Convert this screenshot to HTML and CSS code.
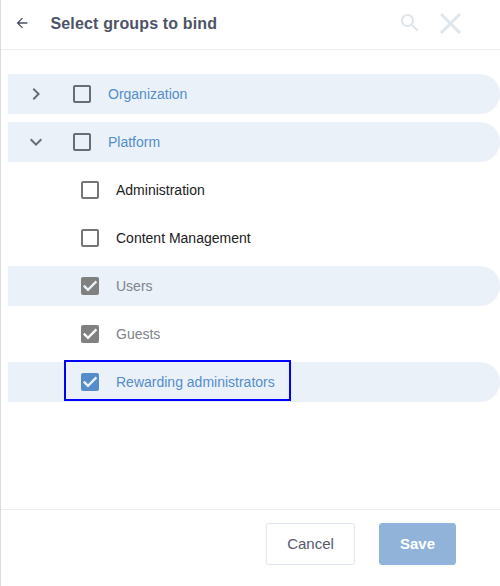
FILE: index.html
```html
<!DOCTYPE html>
<html lang="en">
<head>
<meta charset="utf-8">
<title>Select groups to bind</title>
<link rel="stylesheet" href="styles.css">
</head>
<body>
<section class="panel">
  <header class="header">
    <svg class="back" viewBox="0 0 24 24"><path d="M20 11H7.83l5.59-5.59L12 4l-8 8 8 8 1.41-1.41L7.83 13H20v-2z"/></svg>
    <h1 class="title">Select groups to bind</h1>
    <svg class="search" viewBox="0 0 24 24"><path d="M15.5 14h-.79l-.28-.27C15.41 12.59 16 11.11 16 9.5 16 5.91 13.09 3 9.5 3S3 5.91 3 9.5 5.91 16 9.5 16c1.61 0 3.09-.59 4.23-1.57l.27.28v.79l5 4.99L20.49 19l-4.99-5zm-6 0C7.01 14 5 11.99 5 9.5S7.01 5 9.5 5 14 7.01 14 9.5 11.99 14 9.5 14z"/></svg>
    <svg class="close" viewBox="0 0 21 21"><path d="M1 1l19 19M20 1L1 20"/></svg>
  </header>
  <main class="tree">
    <div class="row shaded">
      <svg class="arrow" viewBox="0 0 24 24"><path d="M10 6L8.59 7.41 13.17 12l-4.58 4.59L10 18l6-6z"/></svg>
      <svg class="box" viewBox="0 0 24 24"><path d="M19 5v14H5V5h14m0-2H5c-1.1 0-2 .9-2 2v14c0 1.1.9 2 2 2h14c1.1 0 2-.9 2-2V5c0-1.1-.9-2-2-2z"/></svg>
      <span class="label accent">Organization</span>
    </div>
    <div class="row shaded">
      <svg class="arrow" viewBox="0 0 24 24"><path d="M16.59 8.59L12 13.17 7.41 8.59 6 10l6 6 6-6z"/></svg>
      <svg class="box" viewBox="0 0 24 24"><path d="M19 5v14H5V5h14m0-2H5c-1.1 0-2 .9-2 2v14c0 1.1.9 2 2 2h14c1.1 0 2-.9 2-2V5c0-1.1-.9-2-2-2z"/></svg>
      <span class="label accent">Platform</span>
    </div>
    <div class="row child">
      <span class="check"></span>
      <span class="label">Administration</span>
    </div>
    <div class="row child">
      <span class="check"></span>
      <span class="label">Content Management</span>
    </div>
    <div class="row child shaded disabled">
      <span class="check checked"><svg viewBox="0 0 18 18"><path d="M2.8 8.6l4.2 4.2 8.4-8.4"/></svg></span>
      <span class="label">Users</span>
    </div>
    <div class="row child disabled">
      <span class="check checked"><svg viewBox="0 0 18 18"><path d="M2.8 8.6l4.2 4.2 8.4-8.4"/></svg></span>
      <span class="label">Guests</span>
    </div>
    <div class="row child shaded selected">
      <span class="check checked"><svg viewBox="0 0 18 18"><path d="M2.8 8.6l4.2 4.2 8.4-8.4"/></svg></span>
      <span class="label accent">Rewarding administrators</span>
      <span class="marker"></span>
    </div>
  </main>
  <footer class="footer">
    <button class="button cancel">Cancel</button>
    <button class="button save">Save</button>
  </footer>
</section>
</body>
</html>
```
FILE: styles.css
```css
* { box-sizing: border-box; }
body {
  margin: 0;
  font-family: "Liberation Sans", Arial, sans-serif;
  background: #fff;
}
.panel {
  display: flex;
  flex-direction: column;
  height: 586px;
  border-left: 1px solid #dcdcde;
  overflow: hidden;
}
.header {
  display: flex;
  align-items: center;
  height: 50px;
  padding: 0 39px 3px 13px;
  border-bottom: 1px solid #eeeeee;
}
.back { width: 16px; height: 16px; fill: #4a5064; }
.title {
  flex: 1;
  margin: 1px 0 0 20.5px;
  font-size: 16px;
  line-height: 20px;
  font-weight: 700;
  letter-spacing: 0.15px;
  color: #4d5468;
}
.search { width: 24px; height: 24px; fill: #dfe6ec; }
.close {
  width: 21px;
  height: 21px;
  margin-left: 18px;
  fill: none;
  stroke: #dfe6ec;
  stroke-width: 3;
}
.tree {
  flex: 1;
  display: flex;
  flex-direction: column;
  gap: 8px;
  padding: 24px 0 0 7px;
}
.row {
  position: relative;
  display: flex;
  align-items: center;
  height: 40px;
  padding-left: 16px;
  border-radius: 0 20px 20px 0;
}
.shaded { background: #eaf1f9; }
.arrow { width: 24px; height: 24px; fill: #696c70; }
.box { width: 24px; height: 24px; margin: 0 14px 0 22px; fill: #696c70; }
.child { padding-left: 73px; }
.check {
  width: 18px;
  height: 18px;
  margin-right: 17px;
  border: 2px solid #757575;
  border-radius: 2px;
}
.checked { border: 0; background: #808080; }
.checked svg {
  display: block;
  fill: none;
  stroke: #fff;
  stroke-width: 2.3;
}
.shaded .checked svg { stroke: #eaf1f9; }
.selected .checked { background: #558dcb; }
.label { font-size: 14px; line-height: 20px; color: #212121; }
.disabled .label { color: #808488; }
.row .accent { color: #558dcb; }
.marker {
  position: absolute;
  left: 56px;
  top: -2px;
  width: 227px;
  height: 41px;
  border: 2px solid #00f;
}
.footer {
  display: flex;
  justify-content: flex-end;
  gap: 24px;
  height: 77px;
  padding: 13px 44px 0 0;
  border-top: 1px solid #eeeeee;
}
.button {
  height: 42px;
  padding: 0 0 2px;
  border: 1px solid #dfe6ee;
  border-radius: 3px;
  font: 15px "Liberation Sans", Arial, sans-serif;
}
.cancel { width: 89px; background: #fff; color: #555b6e; }
.save { width: 77px; border-color: #91b3da; background: #91b3da; color: #fff; font-weight: 700; }
```
